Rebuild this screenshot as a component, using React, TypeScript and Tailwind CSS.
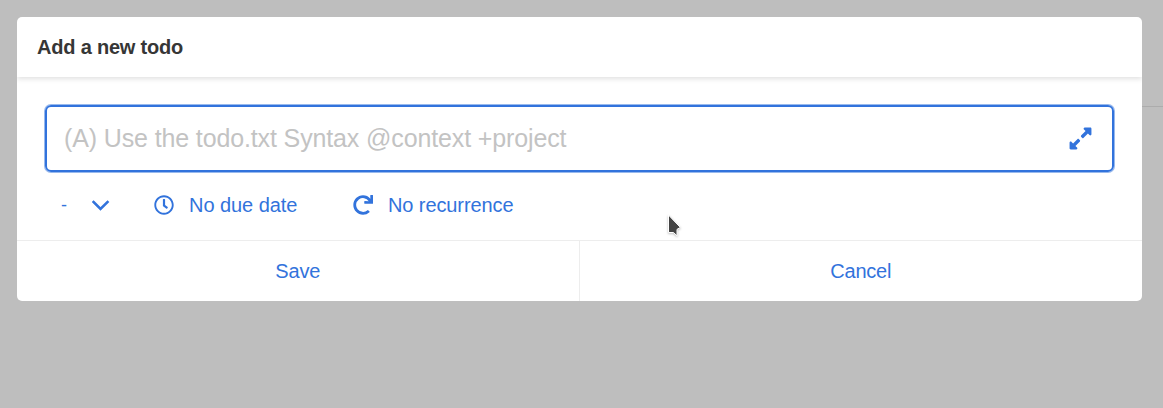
import { FaExpandAlt, FaRedo, FaRegClock } from "react-icons/fa";

export default function App() {
  return (
    <div className="relative flex h-[408px] w-full flex-col overflow-hidden bg-[#bebebe] pl-[17px] pr-[21px] pt-[17px] font-['Liberation_Sans',sans-serif] text-[20px] leading-[30px] text-[#3273dc]">
      <div className="absolute right-0 top-[106px] h-px w-[21px] bg-[#acacac]" />
      <section className="flex h-[284px] w-full flex-col overflow-hidden rounded-[5px] bg-white">
        <header className="flex h-[60px] shrink-0 items-center px-5 font-bold tracking-[-0.2px] text-[#363636] shadow-[0_2px_5px_rgba(10,10,10,0.12)]">
          Add a new todo
        </header>
        <div className="h-[163px] shrink-0 px-[28px] pt-[28px]">
          <div className="flex h-[67px] items-center justify-between rounded-[6px] border-2 border-[#3273dc] pl-[17px] pr-[19px] shadow-[0_0_0_1px_rgba(50,115,220,0.5)]">
            <input
              className="mb-[2px] min-w-0 flex-1 bg-transparent text-[25px] tracking-[-0.13px] outline-none placeholder:text-[#c3c3c3]"
              placeholder="(A) Use the todo.txt Syntax @context +project"
            />
            <FaExpandAlt className="size-[25px]" />
          </div>
          <div className="flex h-[66px] items-center pl-[15px]">
            <span className="w-[32px] pl-px text-[18px]">-</span>
            <svg className="mt-[2px] h-[12px] w-[18px]" viewBox="0 0 18 12" fill="none" stroke="currentColor" strokeWidth="2.6" strokeLinecap="square">
              <path d="M1.5 2 8.5 9 15.5 2" />
            </svg>
            <FaRegClock className="ml-[44px] size-[20px]" />
            <span className="ml-[15px] w-[164px] tracking-[-0.06px]">No due date</span>
            <FaRedo className="size-[20px]" />
            <span className="ml-[15px] tracking-[-0.1px]">No recurrence</span>
          </div>
        </div>
        <footer className="grid h-[61px] grid-cols-2 border-t border-[#ededed]">
          <button className="border-r border-[#ededed] tracking-[-0.2px]">Save</button>
          <button className="tracking-[-0.2px]">Cancel</button>
        </footer>
      </section>
      <svg className="absolute left-[666px] top-[213px] h-[26px] w-[18px] drop-shadow-[0_1px_1px_rgba(0,0,0,0.25)]" viewBox="0 0 18 26">
        <path d="M2.5 2 14.3 14.4 11 16.4V22.8L7.5 19.5H2.5Z" fill="#444" stroke="#fff" strokeWidth="1" />
      </svg>
    </div>
  );
}
